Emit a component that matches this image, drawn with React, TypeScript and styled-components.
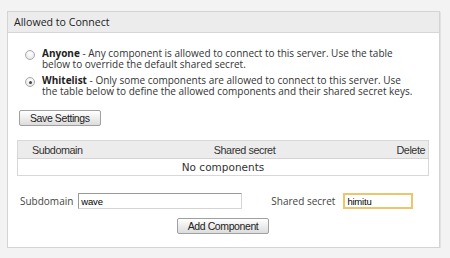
import styled, { createGlobalStyle } from "styled-components"

const GlobalStyle = createGlobalStyle`
  body {
    margin: 0;
    background: #f3f3f3;
    font-family: "Open Sans", "Liberation Sans", sans-serif;
    color: #333;
  }
`

const Panel = styled.div`
  margin: 11px 0 0 7px;
  width: 431px;
  height: 235px;
  background: #fff;
  border: 1px solid #d4d4d4;
  box-shadow: 1px 1px 0 #e2e2e2;
`

const PanelHeader = styled.div`
  height: 20px;
  line-height: 20px;
  padding-left: 6px;
  background: #ececec;
  border-bottom: 1px solid #d6d6d6;
  font-size: 10.6px;
  color: #222;
`

const Body = styled.div`
  padding: 15px 10px 0 9px;
`

const Options = styled.div`
  display: flex;
  flex-direction: column;
  gap: 5px;
  padding: 0 4px 0 8px;
`

const Option = styled.label`
  display: flex;
  align-items: flex-start;
  gap: 7px;
  font-size: 10px;
  line-height: 11px;
  color: #333;
`

const Radio = styled.span<{ $checked?: boolean }>`
  flex: none;
  box-sizing: border-box;
  width: 10px;
  height: 10px;
  margin-top: 2px;
  border-radius: 50%;
  border: 1px solid #a8a8a8;
  background: radial-gradient(circle at 50% 35%, #fff 0%, #e2e2e2 100%);
  display: flex;
  align-items: center;
  justify-content: center;

  &::after {
    content: "";
    display: ${(p) => (p.$checked ? "block" : "none")};
    width: 3px;
    height: 3px;
    border-radius: 50%;
    background: #444;
  }
`

const Description = styled.span`
  white-space: nowrap;
`

const Strong = styled.b`
  font-weight: 700;
  color: #222;
`

const Button = styled.button`
  font-family: "Liberation Sans", Arial, sans-serif;
  font-size: 10.5px;
  letter-spacing: -0.4px;
  color: #222;
  height: 16px;
  padding: 0 10px;
  border: 1px solid #a0a0a0;
  border-radius: 2px;
  background: linear-gradient(#ffffff, #dcdcdc);
  line-height: 14px;
`

const SaveRow = styled.div`
  margin-top: 13px;
  padding-left: 2px;
  display: flex;
`

const Table = styled.table`
  margin-top: 14px;
  width: 100%;
  border-collapse: collapse;
  border: 1px solid #d8d8d8;
  font-family: "Liberation Sans", Arial, sans-serif;
  font-size: 10.5px;
`

const Th = styled.th<{ $align: "left" | "center" | "right"; $width?: number }>`
  height: 17px;
  padding: 0 3px 0 14px;
  width: ${(p) => (p.$width ? `${p.$width}px` : "auto")};
  background: #ececec;
  border-bottom: 1px solid #d4d4d4;
  font-weight: 400;
  font-size: 10.8px;
  letter-spacing: -0.45px;
  color: #333;
  text-align: ${(p) => p.$align};
`

const EmptyCell = styled.td`
  height: 16px;
  padding: 0;
  text-align: center;
  font-family: "DejaVu Sans", sans-serif;
  font-size: 10.5px;
  color: #333;
`

const FormRow = styled.div`
  margin-top: 17px;
  display: flex;
  align-items: center;
  padding-left: 3px;
`

const Label = styled.span`
  font-family: "Open Sans", "Liberation Sans", sans-serif;
  font-size: 10px;
  color: #444;
`

const Input = styled.input<{ $focused?: boolean; $width: number; $gap: number }>`
  box-sizing: border-box;
  width: ${(p) => p.$width}px;
  height: 16px;
  padding: 0 2px;
  margin-left: ${(p) => p.$gap}px;
  font-family: "Liberation Sans", Arial, sans-serif;
  font-size: 9.5px;
  letter-spacing: -0.2px;
  color: #000;
  border: ${(p) => (p.$focused ? "2px solid #ecc56c" : "1px solid #d4d4d4")};
  border-top-color: ${(p) => (p.$focused ? "#ecc56c" : "#9a9a9a")};
  border-left-color: ${(p) => (p.$focused ? "#ecc56c" : "#9a9a9a")};
  outline: none;
  background: #fff;
`

const Spacer = styled.div`
  width: 29px;
`

const AddRow = styled.div`
  margin-top: 9px;
  display: flex;
  justify-content: center;
`

export default function App() {
  return (
    <>
      <GlobalStyle />
      <Panel>
        <PanelHeader>Allowed to Connect</PanelHeader>
        <Body>
          <Options>
            <Option>
              <Radio />
              <Description>
                <Strong>Anyone</Strong> - Any component is allowed to connect to this server. Use the table
                <br />
                below to override the default shared secret.
              </Description>
            </Option>
            <Option>
              <Radio $checked />
              <Description>
                <Strong>Whitelist</Strong> - Only some components are allowed to connect to this server. Use
                <br />
                the table below to define the allowed components and their shared secret keys.
              </Description>
            </Option>
          </Options>
          <SaveRow>
            <Button>Save Settings</Button>
          </SaveRow>
          <Table>
            <thead>
              <tr>
                <Th $align="left" $width={65}>Subdomain</Th>
                <Th $align="center">Shared secret</Th>
                <Th $align="right" $width={33}>Delete</Th>
              </tr>
            </thead>
            <tbody>
              <tr>
                <EmptyCell colSpan={3}>No components</EmptyCell>
              </tr>
            </tbody>
          </Table>
          <FormRow>
            <Label>Subdomain</Label>
            <Input $width={164} $gap={5} defaultValue="wave" />
            <Spacer />
            <Label>Shared secret</Label>
            <Input $width={70} $gap={8} $focused defaultValue="himitu" />
          </FormRow>
          <AddRow>
            <Button>Add Component</Button>
          </AddRow>
        </Body>
      </Panel>
    </>
  )
}
